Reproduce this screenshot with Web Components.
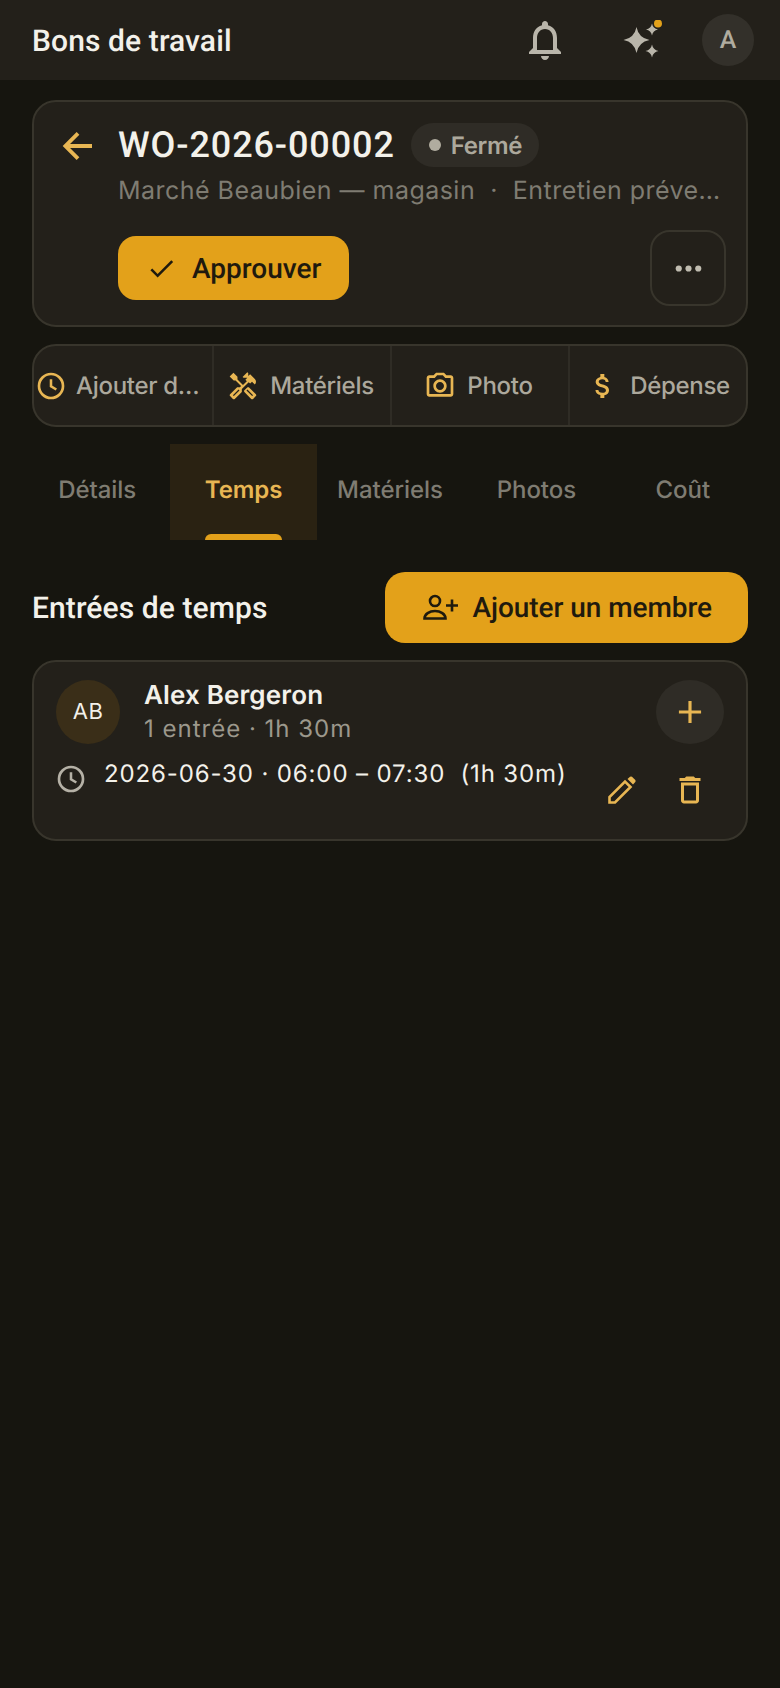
<!DOCTYPE html>
<html lang="fr">
<head>
<meta charset="utf-8">
<title>Bons de travail</title>
<style>
  html, body { margin: 0; background: #16150f; }
  body { font-family: Inter, "Noto Sans", sans-serif; color: #f3f1ea; text-rendering: geometricPrecision; }
</style>
</head>
<body>
<wo-screen>
  <app-bar title="Bons de travail" slot="bar"></app-bar>
  <wo-header code="WO-2026-00002" status="Fermé" sub="Marché Beaubien — magasin &nbsp;·&nbsp; Entretien préventif annuel"></wo-header>
  <action-bar></action-bar>
  <wo-tabs active="Temps"></wo-tabs>
  <time-section heading="Entrées de temps" button="Ajouter un membre">
    <member-card initials="AB" name="Alex Bergeron" summary="1 entrée · 1h 30m">
      <time-entry text="2026-06-30 · 06:00 – 07:30 &nbsp;(1h 30m)"></time-entry>
    </member-card>
  </time-section>
</wo-screen>

<script>
const ICONS = {
  bell: '<path d="M12 22c1.1 0 2-.9 2-2h-4c0 1.1.9 2 2 2zm6-6v-5c0-3.07-1.63-5.64-4.5-6.32V4c0-.83-.67-1.5-1.5-1.5s-1.5.67-1.5 1.5v.68C7.64 5.36 6 7.92 6 11v5l-2 2v1h16v-1l-2-2zm-2 1H8v-6c0-2.48 1.51-4.5 4-4.5s4 2.02 4 4.5v6z"/>',
  back: '<path d="M20 12H5.5M12 4.8 4.8 12l7.2 7.2" fill="none" stroke="currentColor" stroke-width="2.2"/>',
  check: '<path d="M9 16.17 4.83 12l-1.42 1.41L9 19 21 7l-1.41-1.41z"/>',
  clock: '<circle cx="12" cy="12" r="9" fill="none" stroke="currentColor" stroke-width="2"/><path d="M12 7v5.2l4 2.4" fill="none" stroke="currentColor" stroke-width="1.9"/>',
  tools: '<path d="M21.67 18.17l-5.3-5.3h-.99l-2.54 2.54v.99l5.3 5.3c.39.39 1.02.39 1.41 0l2.12-2.12c.39-.38.39-1.02 0-1.41zm-2.83 1.42l-4.24-4.24.71-.71 4.24 4.24-.71.71z"/><path d="M17.34 10.19l1.41-1.41 2.12 2.12c1.17-1.17 1.17-3.07 0-4.24l-3.54-3.54-1.41 1.41V2.34l-.7-.7-3.54 3.54.71.71h2.83l-1.41 1.41 1.06 1.06-2.89 2.89-4.13-4.13V5.06L4.83 2.04 2 4.87 5.03 7.9h1.41l4.13 4.13-.85.85H7.6l-5.3 5.3c-.39.39-.39 1.02 0 1.41l2.12 2.12c.39.39 1.02.39 1.41 0l5.3-5.3v-2.12l5.15-5.15 1.06 1.05zm-7.98 5.15l-4.24 4.24-.71-.71 4.24-4.24.71.71z"/>',
  camera: '<path d="M20 4h-3.17L15 2H9L7.17 4H4c-1.1 0-2 .9-2 2v12c0 1.1.9 2 2 2h16c1.1 0 2-.9 2-2V6c0-1.1-.9-2-2-2zm0 14H4V6h4.05l1.83-2h4.24l1.83 2H20v12zM12 7c-2.76 0-5 2.24-5 5s2.24 5 5 5 5-2.24 5-5-2.24-5-5-5zm0 8c-1.65 0-3-1.35-3-3s1.35-3 3-3 3 1.35 3 3-1.35 3-3 3z"/>',
  dollar: '<path d="M11.8 10.9c-2.27-.59-3-1.2-3-2.15 0-1.09 1.01-1.85 2.7-1.85 1.78 0 2.44.85 2.5 2.1h2.21c-.07-1.72-1.12-3.3-3.21-3.81V3h-3v2.16c-1.94.42-3.5 1.68-3.5 3.61 0 2.31 1.91 3.46 4.7 4.13 2.5.6 3 1.48 3 2.41 0 .69-.49 1.79-2.7 1.79-2.06 0-2.87-.92-2.98-2.1h-2.2c.12 2.19 1.76 3.42 3.68 3.83V21h3v-2.15c1.95-.37 3.5-1.5 3.5-3.55 0-2.84-2.43-3.81-4.7-4.4z"/>',
  plus: '<path d="M19 13h-6v6h-2v-6H5v-2h6V5h2v6h6v2z"/>',
  trash: '<path d="M6 19c0 1.1.9 2 2 2h8c1.1 0 2-.9 2-2V7H6v12zM8 9h8v10H8V9zm7.5-5-1-1h-5l-1 1H5v2h14V4h-3.5z"/>',
  more: '<circle cx="6" cy="12" r="1.9"/><circle cx="12" cy="12" r="1.9"/><circle cx="18" cy="12" r="1.9"/>'
};

function icon(name, w) {
  return `<svg width="${w}" height="${w}" viewBox="0 0 24 24" fill="currentColor" aria-hidden="true">${ICONS[name]}</svg>`;
}

// four-pointed star with concave sides
function star(cx, cy, r) {
  const k = r * 0.16;
  return `M${cx} ${cy - r}Q${cx + k} ${cy - k} ${cx + r} ${cy}Q${cx + k} ${cy + k} ${cx} ${cy + r}Q${cx - k} ${cy + k} ${cx - r} ${cy}Q${cx - k} ${cy - k} ${cx} ${cy - r}Z`;
}

const SPARKLES = `<svg width="44" height="40" viewBox="0 0 44 40" fill="currentColor" aria-hidden="true">
  <path d="${star(15.5, 20, 13)} ${star(31, 9.5, 6)} ${star(31, 31, 6.5)}"/>
  <circle cx="37" cy="3.5" r="4" fill="#e3a11a"/></svg>`;

const PERSON_ADD = `<svg width="37" height="27" viewBox="0 0 37 27" fill="none" stroke="currentColor" stroke-width="2.6" aria-hidden="true">
  <circle cx="13" cy="7" r="5"/><path d="M2.5 24.5c0-4.5 5-7.5 10.5-7.5s10.5 3 10.5 7.5z"/><path d="M24 11.5h12M30 5.5v12"/></svg>`;

const PENCIL = `<svg width="28" height="28" viewBox="0 0 28 28" fill="none" stroke="currentColor" stroke-width="2.6" aria-hidden="true">
  <path d="M1.5 26.5V21L17 5.5 22.5 11 7 26.5z"/>
  <path d="M19.5 3 22 .8q1-.8 2 0l3.3 3.3q.7.9 0 1.9L25 8.5z" fill="currentColor" stroke="none"/></svg>`;

class WoScreen extends HTMLElement {
  constructor() {
    super();
    this.attachShadow({ mode: 'open' }).innerHTML = `
      <style>
        :host { display: flex; flex-direction: column; height: 1688px; overflow: hidden; background: #16150f; }
        .body { display: flex; flex-direction: column; padding: 20px 32px 0; }
      </style>
      <slot name="bar"></slot>
      <div class="body"><slot></slot></div>
    `;
  }
}

class AppBar extends HTMLElement {
  connectedCallback() {
    this.attachShadow({ mode: 'open' }).innerHTML = `
      <style>
        :host { display: flex; align-items: center; height: 80px; padding: 0 26px 0 32px; background: #23201a; }
        h1 { flex: 1; margin: 2px 0 0; font: 500 30px Roboto, sans-serif; letter-spacing: .1px; color: #f3f1ea; }
        .btn { display: flex; color: #b9b5aa; }
        .bell { margin-right: 52px; }
        .spark { margin-right: 37px; }
        .me { width: 52px; height: 52px; border-radius: 50%; background: #33302a; color: #b0ac9f; display: flex; align-items: center; justify-content: center; font: 500 25px Roboto, sans-serif; }
      </style>
      <h1>${this.getAttribute('title')}</h1>
      <span class="btn bell">${icon('bell', 48)}</span>
      <span class="btn spark">${SPARKLES}</span>
      <span class="me">A</span>
    `;
  }
}

class WoHeader extends HTMLElement {
  connectedCallback() {
    this.attachShadow({ mode: 'open' }).innerHTML = `
      <style>
        :host { display: grid; grid-template-columns: 60px minmax(0, 1fr); box-sizing: border-box; height: 227px; padding: 21px 20px 19px 24px; background: #23201a; border: 2px solid #38352c; border-radius: 24px; }
        .back { color: #e8b653; padding-top: 2px; display: flex; align-items: flex-start; margin-left: -1px; }
        .top { display: flex; align-items: center; gap: 16px; height: 44px; }
        h2 { margin: 0; font: 500 36px Roboto, sans-serif; letter-spacing: 0.9px; color: #f3f1ea; }
        .pill { display: flex; align-items: center; gap: 10px; height: 44px; padding: 0 17px 0 18px; border-radius: 22px; background: #2f2c26; color: #aca89c; font: 600 24px Inter, sans-serif; letter-spacing: -.4px; }
        .pill i { width: 12px; height: 12px; border-radius: 50%; background: #b0ac9f; }
        .sub { margin-top: 7px; padding-right: 4px; font: 400 25px/34px Inter, sans-serif; letter-spacing: 0.47px; color: #7f7c72; white-space: nowrap; overflow: hidden; text-overflow: ellipsis; }
        .row { display: flex; align-items: center; justify-content: space-between; margin-top: 22px; }
        .approve { display: flex; align-items: center; gap: 15px; height: 64px; padding: 0 28px; border-radius: 18px; background: #e3a11a; color: #1f1a0e; font: 500 28px Roboto, sans-serif; }
        .more { box-sizing: border-box; width: 76px; height: 76px; border: 2px solid #38352c; border-radius: 20px; display: flex; align-items: center; justify-content: center; color: #c0bcb0; }
      </style>
      <div class="back">${icon('back', 42)}</div>
      <div>
        <div class="top"><h2>${this.getAttribute('code')}</h2><span class="pill"><i></i>${this.getAttribute('status')}</span></div>
        <div class="sub">${this.getAttribute('sub')}</div>
        <div class="row">
          <span class="approve">${icon('check', 31)}Approuver</span>
          <span class="more">${icon('more', 39)}</span>
        </div>
      </div>
    `;
  }
}

class ActionBar extends HTMLElement {
  connectedCallback() {
    const items = [['clock', 'Ajouter du temps'], ['tools', 'Matériels'], ['camera', 'Photo'], ['dollar', 'Dépense']];
    this.attachShadow({ mode: 'open' }).innerHTML = `
      <style>
        :host { display: grid; grid-template-columns: repeat(4, 1fr); box-sizing: border-box; height: 83px; margin-top: 17px; background: #23201a; border: 2px solid #38352c; border-radius: 24px; overflow: hidden; }
        .it { display: flex; align-items: center; justify-content: center; gap: 11px; min-width: 0; padding: 0 3px 0 0; color: #aca89c; font: 550 24px Inter, sans-serif; letter-spacing: -0.3px; border-left: 2px solid #2f2c25; }
        .it:first-of-type { border-left: 0; padding: 0 11px 0 0; justify-content: flex-start; gap: 9px; }
        .it:last-of-type { padding: 0 0 0 1px; }
        svg { flex: none; color: #e8b653; }
        .it:first-of-type svg { margin-left: 1px; }
        span { white-space: nowrap; overflow: hidden; text-overflow: ellipsis; }
      </style>
      ${items.map(i => `<div class="it">${icon(i[0], 32)}<span>${i[1]}</span></div>`).join('')}
    `;
  }
}

class WoTabs extends HTMLElement {
  connectedCallback() {
    const active = this.getAttribute('active');
    const tabs = ['Détails', 'Temps', 'Matériels', 'Photos', 'Coût'];
    this.attachShadow({ mode: 'open' }).innerHTML = `
      <style>
        :host { display: grid; grid-template-columns: repeat(5, 1fr); height: 96px; margin: 17px -8px 0; }
        .tab { position: relative; display: flex; align-items: center; justify-content: center; box-sizing: border-box; padding-bottom: 5px; font: 550 24px Inter, sans-serif; letter-spacing: -.05px; color: #7f7c72; }
        .tab.on { background: #2a2212; color: #e8b653; font-weight: 600; }
        .on::after { content: ""; position: absolute; left: 35px; right: 35px; bottom: 0; height: 6px; border-radius: 6px 6px 0 0; background: #e3a11a; }
      </style>
      ${tabs.map(t => `<div class="tab ${t === active ? 'on' : ''}">${t}</div>`).join('')}
    `;
  }
}

class TimeSection extends HTMLElement {
  connectedCallback() {
    this.attachShadow({ mode: 'open' }).innerHTML = `
      <style>
        :host { display: block; margin-top: 32px; }
        .head { display: flex; align-items: center; justify-content: space-between; height: 71px; margin-bottom: 17px; }
        h3 { margin: 1px 0 0; font: 500 30px Roboto, sans-serif; letter-spacing: .1px; color: #f3f1ea; }
        .add { display: flex; align-items: center; gap: 14px; height: 71px; padding: 0 36px 0 37px; border-radius: 20px; background: #e3a11a; color: #1f1a0e; font: 500 28px Roboto, sans-serif; letter-spacing: -.06px; }
      </style>
      <div class="head"><h3>${this.getAttribute('heading')}</h3><span class="add">${PERSON_ADD}${this.getAttribute('button')}</span></div>
      <slot></slot>
    `;
  }
}

class MemberCard extends HTMLElement {
  connectedCallback() {
    this.attachShadow({ mode: 'open' }).innerHTML = `
      <style>
        :host { display: block; box-sizing: border-box; height: 181px; padding: 17px 22px 0 22px; background: #23201a; border: 2px solid #38352c; border-radius: 24px; }
        .top { display: flex; align-items: center; }
        .av { width: 64px; height: 64px; border-radius: 50%; background: #3a2e18; display: flex; align-items: center; justify-content: center; font: 400 22px Inter, sans-serif; color: #f3f1ea; letter-spacing: .5px; }
        .who { flex: 1; margin-left: 24px; }
        .name { font: 600 26px/33px Inter, sans-serif; letter-spacing: .15px; color: #f3f1ea; }
        .sum { margin-top: 2px; font: 400 24px/30px Inter, sans-serif; letter-spacing: 1px; color: #9c988c; }
        .plus { width: 68px; height: 64px; border-radius: 50%; background: #2f2c26; color: #e8b653; display: flex; align-items: center; justify-content: center; }
      </style>
      <div class="top">
        <div class="av">${this.getAttribute('initials')}</div>
        <div class="who"><div class="name">${this.getAttribute('name')}</div><div class="sum">${this.getAttribute('summary')}</div></div>
        <span class="plus">${icon('plus', 38)}</span>
      </div>
      <slot></slot>
    `;
  }
}

class TimeEntry extends HTMLElement {
  connectedCallback() {
    this.attachShadow({ mode: 'open' }).innerHTML = `
      <style>
        :host { display: flex; align-items: flex-start; margin-top: 15px; }
        .clock { color: #b5b1a6; margin: 4px 17px 0 -1px; display: flex; }
        .txt { flex: 1; font: 400 24px/30px Inter, sans-serif; letter-spacing: .87px; color: #f3f1ea; white-space: nowrap; }
        .acts { display: flex; align-items: center; gap: 36px; color: #e8b653; margin: 13px 16px 0 0; }
      </style>
      <span class="clock">${icon('clock', 32)}</span>
      <span class="txt">${this.getAttribute('text')}</span>
      <span class="acts">${PENCIL}${icon('trash', 36)}</span>
    `;
  }
}

customElements.define('wo-screen', WoScreen);
customElements.define('app-bar', AppBar);
customElements.define('wo-header', WoHeader);
customElements.define('action-bar', ActionBar);
customElements.define('wo-tabs', WoTabs);
customElements.define('time-section', TimeSection);
customElements.define('member-card', MemberCard);
customElements.define('time-entry', TimeEntry);
</script>
</body>
</html>
